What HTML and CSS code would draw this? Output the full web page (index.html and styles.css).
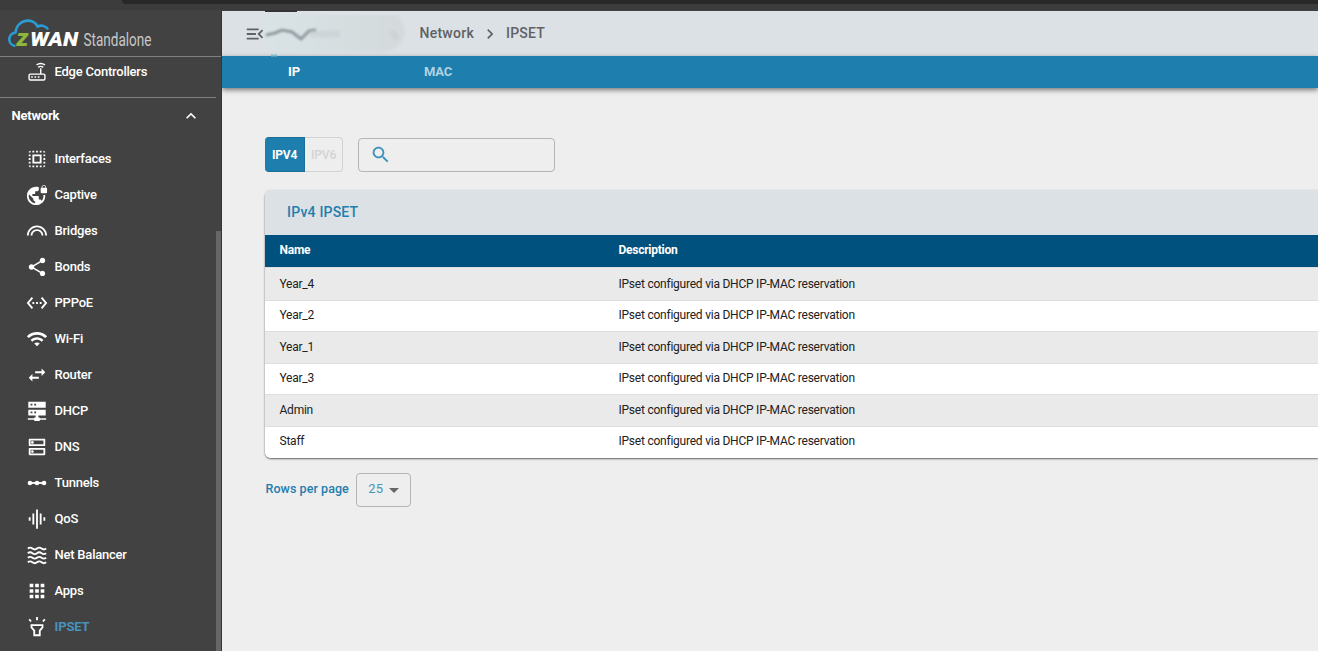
FILE: index.html
```
<!DOCTYPE html>
<html lang="en">

<head>
    <meta charset="UTF-8" />
    <meta name="viewport" content="width=device-width, initial-scale=1.0" />
    <title>zWAN - IPSET</title>
    <link rel="stylesheet" href="styles.css">
</head>

<body>
    <div class="topstrip"><div class="topstrip-pill"></div></div>
    <div class="app">
        <aside class="sidebar">
            <div class="logo">
                <svg width="210" height="45" viewBox="0 0 210 45">
                    <path d="M15.500 35C7.500 34 7 23 15.500 21.500C17 7.500 34 6.500 37.500 15.500C42 13.500 46.500 15.500 48 18.500" fill="none" stroke="#2a9bd6" stroke-width="2.600" />
                    <text class="logo-z" x="16.500" y="35" textLength="12" lengthAdjust="spacingAndGlyphs">z</text>
                    <text class="logo-wan" x="30" y="35" textLength="48" lengthAdjust="spacingAndGlyphs">WAN</text>
                    <text class="logo-sub" x="83.500" y="35" textLength="68" lengthAdjust="spacingAndGlyphs">Standalone</text>
                </svg>
            </div>
            <nav class="menu">
                <a class="item first">
                    <svg viewBox="0 0 24 24"><path d="M4 14.500h16a1.500 1.500 0 0 1 1.500 1.500v4a1.500 1.500 0 0 1-1.500 1.500H4A1.500 1.500 0 0 1 2.500 20v-4A1.500 1.500 0 0 1 4 14.500zM16.500 14V7.500M13.500 6.500q3-2.500 6 0M11.500 3.500q5-3.500 10 0" fill="none" stroke="#fff" stroke-width="1.700" /><path d="M5 17h2v2H5zM9 17h2v2H9zM13 17h2v2h-2z" /></svg>
                    <span>Edge Controllers</span>
                </a>
                <div class="group">
                    <span>Network</span>
                    <svg viewBox="0 0 24 24"><path d="M12 8l-6 6 1.410 1.410L12 10.830l4.590 4.580L18 14z" /></svg>
                </div>
                <a class="item">
                    <svg viewBox="0 0 24 24"><path d="M3 5h2V3c-1.100 0-2 .9-2 2zm0 8h2v-2H3v2zm4 8h2v-2H7v2zM3 9h2V7H3v2zm10-6h-2v2h2V3zm6 0v2h2c0-1.100-.9-2-2-2zM5 21v-2H3c0 1.100.9 2 2 2zm-2-4h2v-2H3v2zM9 3H7v2h2V3zm2 18h2v-2h-2v2zm8-8h2v-2h-2v2zm0 8c1.100 0 2-.9 2-2h-2v2zm0-12h2V7h-2v2zm0 8h2v-2h-2v2zm-4 4h2v-2h-2v2zm0-16h2V3h-2v2zM7 17h10V7H7v10zm2-8h6v6H9V9z" /></svg>
                    <span>Interfaces</span>
                </a>
                <a class="item">
                    <svg viewBox="0 0 24 24"><path d="M22 4v-.5C22 2.120 20.880 1 19.500 1S17 2.120 17 3.500V4c-.55 0-1 .45-1 1v4c0 .55.45 1 1 1h5c.55 0 1-.45 1-1V5c0-.55-.45-1-1-1zm-.8 0h-3.400v-.5c0-.94.76-1.700 1.700-1.700s1.700.76 1.700 1.700V4zm-2.280 8c.04.33.08.66.08 1 0 2.080-.8 3.970-2.100 5.390-.26-.81-1-1.390-1.900-1.390h-1v-3c0-.55-.45-1-1-1H7v-2h2c.55 0 1-.45 1-1V8h2c1.100 0 2-.9 2-2V3.460c-.95-.3-1.960-.46-3-.46C5.480 3 1 7.480 1 13s4.480 10 10 10 10-4.480 10-10c0-.34-.02-.67-.05-1h-2.030zM10 20.930c-3.950-.49-7-3.850-7-7.930 0-.62.08-1.210.21-1.790L8 16v1c0 1.100.9 2 2 2v1.930z" /></svg>
                    <span>Captive</span>
                </a>
                <a class="item">
                    <svg viewBox="0 0 24 24"><path d="M12 10c-3.860 0-7 3.140-7 7h2c0-2.760 2.240-5 5-5s5 2.240 5 5h2c0-3.860-3.140-7-7-7zm0-4C5.930 6 1 10.930 1 17h2c0-4.960 4.040-9 9-9s9 4.040 9 9h2c0-6.070-4.930-11-11-11z" /></svg>
                    <span>Bridges</span>
                </a>
                <a class="item">
                    <svg viewBox="0 0 24 24"><path d="M18 16.080c-.76 0-1.440.3-1.960.77L8.910 12.700c.05-.23.09-.46.09-.7s-.04-.47-.09-.7l7.050-4.110c.54.5 1.250.81 2.040.81 1.660 0 3-1.340 3-3s-1.340-3-3-3-3 1.340-3 3c0 .24.04.47.09.7L8.040 9.810C7.500 9.310 6.790 9 6 9c-1.660 0-3 1.340-3 3s1.340 3 3 3c.79 0 1.500-.31 2.040-.81l7.120 4.160c-.05.21-.08.43-.08.65 0 1.610 1.310 2.920 2.920 2.920s2.920-1.310 2.920-2.920-1.310-2.920-2.920-2.920z" /></svg>
                    <span>Bonds</span>
                </a>
                <a class="item">
                    <svg viewBox="0 0 24 24"><path d="M7.770 6.760L6.230 5.480.82 12l5.410 6.520 1.540-1.280L3.420 12l4.350-5.240zM7 13h2v-2H7v2zm10-2h-2v2h2v-2zm-6 2h2v-2h-2v2zm6.770-7.520l-1.540 1.280L20.580 12l-4.350 5.240 1.540 1.280L23.180 12l-5.410-6.520z" /></svg>
                    <span>PPPoE</span>
                </a>
                <a class="item">
                    <svg viewBox="0 0 24 24"><path d="M1 9l2 2c4.970-4.970 13.030-4.970 18 0l2-2C16.930 2.930 7.080 2.930 1 9zm8 8l3 3 3-3c-1.650-1.660-4.340-1.660-6 0zm-4-4l2 2c2.760-2.760 7.240-2.760 10 0l2-2C15.140 9.140 8.870 9.140 5 13z" /></svg>
                    <span>Wi-Fi</span>
                </a>
                <a class="item">
                    <svg viewBox="0 0 24 24"><path d="M6.990 11L3 15l3.990 4v-3H14v-2H6.990v-3zM21 9l-3.990-4v3H10v2h7.010v3L21 9z" /></svg>
                    <span>Router</span>
                </a>
                <a class="item">
                    <svg viewBox="0 0 24 24"><path fill-rule="evenodd" d="M2.500 2h19v6.500h-19zM5 4v2h2V4zM9 4v2h2V4zM2.500 10.500h19V17h-8v2h1.500v1H22v1.500h-7V23H9v-1.500H2V20h7v-1h1.500v-2h-8zM5 12.500v2h2v-2zM9 12.500v2h2v-2z" /></svg>
                    <span>DHCP</span>
                </a>
                <a class="item">
                    <svg viewBox="0 0 24 24"><path d="M19 15v4H5v-4h14m1-2H4c-.55 0-1 .45-1 1v6c0 .55.45 1 1 1h16c.55 0 1-.45 1-1v-6c0-.55-.45-1-1-1zM7 18.500c-.82 0-1.500-.67-1.500-1.500s.68-1.500 1.500-1.500 1.500.67 1.500 1.500-.67 1.500-1.500 1.500zM19 5v4H5V5h14m1-2H4c-.55 0-1 .45-1 1v6c0 .55.45 1 1 1h16c.55 0 1-.45 1-1V4c0-.55-.45-1-1-1zM7 8.500c-.82 0-1.500-.67-1.500-1.500S6.180 5.500 7 5.500s1.500.68 1.500 1.500S7.830 8.500 7 8.500z" /></svg>
                    <span>DNS</span>
                </a>
                <a class="item">
                    <svg viewBox="0 0 24 24"><circle cx="4.300" cy="12" r="2.500" /><circle cx="12" cy="12" r="2.500" /><circle cx="19.700" cy="12" r="2.500" /><path d="M4 11h16v2H4z" /></svg>
                    <span>Tunnels</span>
                </a>
                <a class="item">
                    <svg viewBox="0 0 24 24"><path d="M7 18h2V6H7v12zm4 4.500h2v-21h-2v21zM3 14h2v-4H3v4zm12 4h2V6h-2v12zm4-8v4h2v-4h-2z" /></svg>
                    <span>QoS</span>
                </a>
                <a class="item">
                    <svg viewBox="0 0 24 24"><path d="M2 5q2.500-2 5 0t5 0t5 0t5 0M2 10q2.500-2 5 0t5 0t5 0t5 0M2 15q2.500-2 5 0t5 0t5 0t5 0M2 20q2.500-2 5 0t5 0t5 0t5 0" fill="none" stroke="#fff" stroke-width="2" /></svg>
                    <span>Net Balancer</span>
                </a>
                <a class="item">
                    <svg viewBox="0 0 24 24"><path d="M4 8h4V4H4v4zm6 12h4v-4h-4v4zm-6 0h4v-4H4v4zm0-6h4v-4H4v4zm6 0h4v-4h-4v4zm6-10v4h4V4h-4zm-6 4h4V4h-4v4zm6 6h4v-4h-4v4zm0 6h4v-4h-4v4z" /></svg>
                    <span>Apps</span>
                </a>
                <a class="item active">
                    <svg viewBox="0 0 24 24"><path d="M6 10h12v2.500l-3 3.500v5H9v-5l-3-3.500zM12 1v3.500M3.500 3.500l2 2.500M20.500 3.500l-2 2.500" fill="none" stroke="#fff" stroke-width="2" /></svg>
                    <span>IPSET</span>
                </a>
            </nav>
            <div class="scroll-thumb"></div>
        </aside>

        <main class="main">
            <header class="breadcrumb">
                <svg class="menu-open" viewBox="0 0 24 24"><path d="M3 18h13v-2H3v2zm0-5h10v-2H3v2zm0-7v2h13V6H3zm18 9.590L17.420 12 21 8.410 19.590 7l-5 5 5 5L21 15.590z" /></svg>
                <svg class="site-name" viewBox="0 0 150 48">
                    <defs>
                        <filter id="soft" x="-20%" y="-50%" width="140%" height="200%"><feGaussianBlur stdDeviation="1.300" /></filter>
                        <linearGradient id="haze"><stop offset="0" stop-color="#d9e3e6" /><stop offset="1" stop-color="#d4dadc" /></linearGradient>
                    </defs>
                    <path d="M6 5H137Q146 14 145 26Q140 40 122 42H20Q4 38 4 22z" fill="url(#haze)" filter="url(#soft)" />
                    <path d="M6 25L15 23L22 20L32 22L41 29L49 21L56 20" fill="none" stroke="#757d84" stroke-width="3" opacity=".7" filter="url(#soft)" />
                    <path d="M7 26h22" fill="none" stroke="#8d959b" stroke-width="6" opacity=".5" filter="url(#soft)" />
                    <path d="M50 24h30M131 21l6 8" fill="none" stroke="#c5ccd1" stroke-width="7" opacity=".5" filter="url(#soft)" />
                    <path d="M5 0h32v2H5z" fill="#333" />
                    <path d="M11 44.500h6v2h-6z" fill="#83bccf" />
                </svg>
                <span>Network</span>
                <svg class="chevron" viewBox="0 0 24 24"><path d="M10 6L8.590 7.410 13.170 12l-4.580 4.590L10 18l6-6z" /></svg>
                <span>IPSET</span>
            </header>
            <div class="tabs">
                <div class="tab selected">IP</div>
                <div class="tab">MAC</div>
            </div>

            <section class="content">
                <div class="toolbar">
                    <div class="toggle">
                        <button class="on">IPV4</button>
                        <button>IPV6</button>
                    </div>
                    <div class="search">
                        <svg viewBox="0 0 24 24"><path d="M15.500 14h-.79l-.28-.27C15.410 12.590 16 11.110 16 9.500 16 5.910 13.090 3 9.500 3S3 5.910 3 9.500 5.910 16 9.500 16c1.610 0 3.090-.59 4.230-1.570l.27.28v.79l5 4.990L20.490 19l-4.990-5zm-6 0C7.010 14 5 11.990 5 9.500S7.010 5 9.500 5 14 7.010 14 9.500 11.990 14 9.500 14z" /></svg>
                    </div>
                </div>

                <div class="card">
                    <h2>IPv4 IPSET</h2>
                    <table>
                        <thead>
                            <tr><th class="name">Name</th><th>Description</th></tr>
                        </thead>
                        <tbody>
                            <tr><td>Year_4</td><td>IPset configured via DHCP IP-MAC reservation</td></tr>
                            <tr><td>Year_2</td><td>IPset configured via DHCP IP-MAC reservation</td></tr>
                            <tr><td>Year_1</td><td>IPset configured via DHCP IP-MAC reservation</td></tr>
                            <tr><td>Year_3</td><td>IPset configured via DHCP IP-MAC reservation</td></tr>
                            <tr><td>Admin</td><td>IPset configured via DHCP IP-MAC reservation</td></tr>
                            <tr><td>Staff</td><td>IPset configured via DHCP IP-MAC reservation</td></tr>
                        </tbody>
                    </table>
                </div>

                <div class="pager">
                    <span>Rows per page</span>
                    <div class="select">25<i></i></div>
                </div>
            </section>
        </main>
    </div>
</body>

</html>
```
FILE: styles.css
```
* {
    box-sizing: border-box;
}

body {
    margin: 0;
    height: 651px;
    overflow: hidden;
    font-family: Roboto, "Liberation Sans", sans-serif;
    background-color: #eee;
}

.topstrip {
    height: 11px;
    background-color: #3c3c3c;
    border-bottom: 1px solid #424040;
}

.topstrip-pill {
    height: 4px;
    margin-left: 122px;
    background-color: #282828;
    border-bottom-left-radius: 6px;
}

.app {
    display: flex;
    height: 640px;
}

/* sidebar */
.sidebar {
    position: relative;
    width: 222px;
    flex: none;
    background-color: #424242;
    border-right: 1px solid #353535;
    color: #fff;
    overflow: hidden;
}

.logo {
    height: 46px;
    border-bottom: 1px solid #808080;
}

.logo svg {
    display: block;
}

.logo-z,
.logo-wan {
    font-weight: 900;
    font-style: italic;
    font-size: 20px;
    fill: #fff;
}

.logo-z {
    font-size: 23px;
    fill: #8cb63c;
}

.logo-sub {
    font-size: 19px;
    fill: #c8c8c8;
}

.item {
    display: flex;
    align-items: center;
    height: 36px;
    padding-left: 26px;
    gap: 6.5px;
    font-size: 13px;
    font-weight: 500;
    letter-spacing: -0.22px;
}

.item span {
    padding-bottom: 2px;
}

.item svg {
    width: 22px;
    height: 22px;
    fill: #fff;
}

.item.first {
    height: 30px;
}

.item.first svg {
    width: 20px;
    height: 20px;
    margin: 0 1px;
}

.item.active {
    color: #4693bb;
    font-weight: 700;
    letter-spacing: -0.15px;
}

.group {
    display: flex;
    align-items: center;
    justify-content: space-between;
    width: 216px;
    height: 44px;
    margin-top: 10px;
    padding: 0 15px 8px 11.5px;
    border-top: 1px solid #808080;
    font-size: 13px;
    font-weight: 700;
    letter-spacing: -0.2px;
}

.group svg {
    width: 20px;
    height: 20px;
    fill: #fff;
}

.scroll-thumb {
    position: absolute;
    right: 0;
    top: 220px;
    width: 5px;
    height: 430px;
    background-color: #666;
}

/* header */
.main {
    flex: 1;
    min-width: 0;
}

.breadcrumb {
    display: flex;
    align-items: center;
    height: 45px;
    padding-left: 22px;
    background-color: #dce1e5;
    color: #5f6265;
    font-size: 14px;
    font-weight: 500;
    letter-spacing: 0.25px;
}

.breadcrumb span {
    padding-bottom: 1px;
}

.breadcrumb svg {
    flex: none;
    fill: #5f6265;
}

.menu-open {
    width: 22px;
    height: 22px;
}

.site-name {
    width: 150px;
    height: 48px;
    margin: 0 9.5px 0 -6px;
    z-index: 1;
}

.chevron {
    width: 20px;
    height: 20px;
    margin: 0 6px;
}

.tabs {
    display: flex;
    height: 32px;
    background-color: #1e7eae;
    box-shadow: 0 2px 5px rgba(0, 0, 0, 0.5);
}

.tab {
    width: 144px;
    line-height: 32px;
    text-align: center;
    color: #b0d3e3;
    font-size: 13px;
    font-weight: 700;
    letter-spacing: -0.2px;
}

.tab.selected {
    color: #fff;
}

/* content */
.content {
    padding: 49px 0 0 43px;
}

.toolbar {
    display: flex;
    align-items: center;
    gap: 15px;
}

.toggle {
    display: flex;
    width: 78px;
    height: 35px;
}

.toggle button {
    width: 38px;
    padding: 0;
    border: 1px solid #d2d2d2;
    border-left: none;
    border-radius: 0 4px 4px 0;
    background: none;
    color: #d3d3d3;
    font-family: inherit;
    font-size: 12px;
    font-weight: 500;
    letter-spacing: -0.1px;
}

.toggle .on {
    width: 40px;
    border-color: #1a6e98;
    border-radius: 4px 0 0 4px;
    background-color: #1e7eae;
    color: #fff;
    font-weight: 700;
    letter-spacing: -0.2px;
}

.search {
    width: 197px;
    height: 34px;
    padding: 5px 11px;
    border: 1px solid #b4b4b4;
    border-radius: 4px;
}

.search svg {
    display: block;
    width: 21.5px;
    height: 21.5px;
    fill: #3b92bd;
}

.card {
    margin-top: 18px;
    border-radius: 6px 0 0 6px;
    overflow: hidden;
    box-shadow: 0 1px 2px rgba(0, 0, 0, 0.6);
}

.card h2 {
    margin: 0;
    height: 45px;
    padding-left: 22px;
    line-height: 45px;
    background-color: #dce1e5;
    color: #1e7eae;
    font-size: 14px;
    font-weight: 500;
    letter-spacing: 0.2px;
}

table {
    width: 100%;
    border-spacing: 0;
    table-layout: fixed;
    font-size: 12px;
}

th,
td {
    padding: 0 0 0 14.5px;
    text-align: left;
}

th {
    height: 32px;
    padding-bottom: 2px;
    background-color: #00517d;
    color: #fff;
    font-weight: 700;
    letter-spacing: -0.25px;
}

th.name {
    width: 339px;
}

td {
    height: 31px;
    padding-bottom: 3px;
    background-color: #fff;
    border-bottom: 1px solid #dedede;
    color: #212121;
    letter-spacing: -0.23px;
}

tbody tr:nth-child(odd) td {
    height: 32px;
    padding-bottom: 1px;
    background-color: #eaeaea;
}

tbody tr:first-child td {
    height: 34px;
    border-top: 1px solid #dedede;
}

tbody tr:last-child td {
    border-bottom: none;
}

.pager {
    display: flex;
    align-items: center;
    gap: 7.5px;
    margin-top: 15px;
    padding-left: 0.5px;
    color: #1e7eae;
    font-size: 12.5px;
    font-weight: 500;
    letter-spacing: 0.06px;
}

.pager span {
    padding-bottom: 3px;
}

.select {
    display: flex;
    align-items: center;
    gap: 6px;
    width: 55px;
    height: 34px;
    padding-left: 11px;
    padding-bottom: 3px;
    border: 1px solid #b4b4b4;
    border-radius: 4px;
    color: #4693bb;
    font-size: 13px;
    font-weight: 400;
}

.select i {
    margin-top: 4px;
    border: 5px solid transparent;
    border-top-color: #666;
    border-bottom: none;
}
```
